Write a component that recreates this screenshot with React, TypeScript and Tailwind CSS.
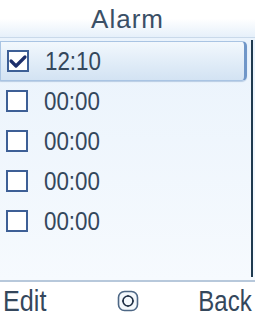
import React from "react";

const font = { fontFamily: '"Liberation Sans", Arial, sans-serif' };

function Box({ checked }: { checked?: boolean }) {
  return (
    <div className="w-[22px] h-[22px] border-2 border-[#3d5f96] bg-white relative shrink-0">
      {checked && (
        <svg className="absolute left-[-2px] top-[-2px]" width="22" height="22" viewBox="0 0 22 22">
          <path d="M4 11 L9 16 L18 7" fill="none" stroke="#1d2f6b" strokeWidth="3.2" strokeLinecap="round" strokeLinejoin="round" />
        </svg>
      )}
    </div>
  );
}

function Row({ time, selected }: { time: string; selected?: boolean }) {
  return (
    <div
      className={
        "h-[40px] flex items-center gap-[16px] pl-[6px] " +
        (selected
          ? "bg-gradient-to-b from-[#f2f8fd] via-[#e2edf8] to-[#d3e3f3] border border-[#a9c4e3] border-r-[3px] border-r-[#6f96c8] rounded-r-[5px] pl-[5px] shadow-[0_1px_1px_#b9cde4]"
          : "")
      }
    >
      <Box checked={selected} />
      <span
        className="inline-block text-[26px] leading-none text-[#34475c] scale-x-[0.86] origin-left"
        style={font}
      >
        {time}
      </span>
    </div>
  );
}

export default function App() {
  return (
    <div className="w-[255px] h-[320px] flex flex-col bg-[#f1f7fd] overflow-hidden" style={font}>
      <div className="h-[38px] flex items-center justify-center bg-gradient-to-b from-white via-white to-[#e6f0fa] border-b border-[#c9d9ea]">
        <span className="text-[26px] leading-none text-[#3a4f66] tracking-[1px]">Alarm</span>
      </div>
      <div className="flex-1 relative pt-[3px] pr-[8px] bg-gradient-to-b from-[#eaf3fc] to-[#f6fafe]">
        <Row time="12:10" selected />
        <Row time="00:00" />
        <Row time="00:00" />
        <Row time="00:00" />
        <Row time="00:00" />
        <div className="absolute right-[2px] top-[2px] bottom-[3px] w-[2px] bg-[#1f3a4f]" />
      </div>
      <div className="h-[40px] grid grid-cols-3 items-center px-[3px] bg-white border-t-2 border-[#b7c8db]">
        <div className="flex justify-start">
          <span className="inline-block text-[30px] leading-none text-[#34475c] scale-x-[0.84] origin-left whitespace-nowrap">
            Edit
          </span>
        </div>
        <div className="flex justify-center">
          <svg width="22" height="22" viewBox="0 0 22 22">
            <rect x="1.5" y="1.5" width="19" height="19" rx="6" fill="#f4f8fc" stroke="#4d6785" strokeWidth="1.6" />
            <circle cx="11" cy="11" r="5" fill="none" stroke="#1f2f45" strokeWidth="1.6" />
            <path d="M11 4.8 L9.6 6.6 H12.4 Z M11 17.2 L9.6 15.4 H12.4 Z M4.8 11 L6.6 9.6 V12.4 Z M17.2 11 L15.4 9.6 V12.4 Z" fill="#1f2f45" />
          </svg>
        </div>
        <div className="flex justify-end">
          <span className="inline-block text-[30px] leading-none text-[#34475c] scale-x-[0.8] origin-right whitespace-nowrap">
            Back
          </span>
        </div>
      </div>
    </div>
  );
}
